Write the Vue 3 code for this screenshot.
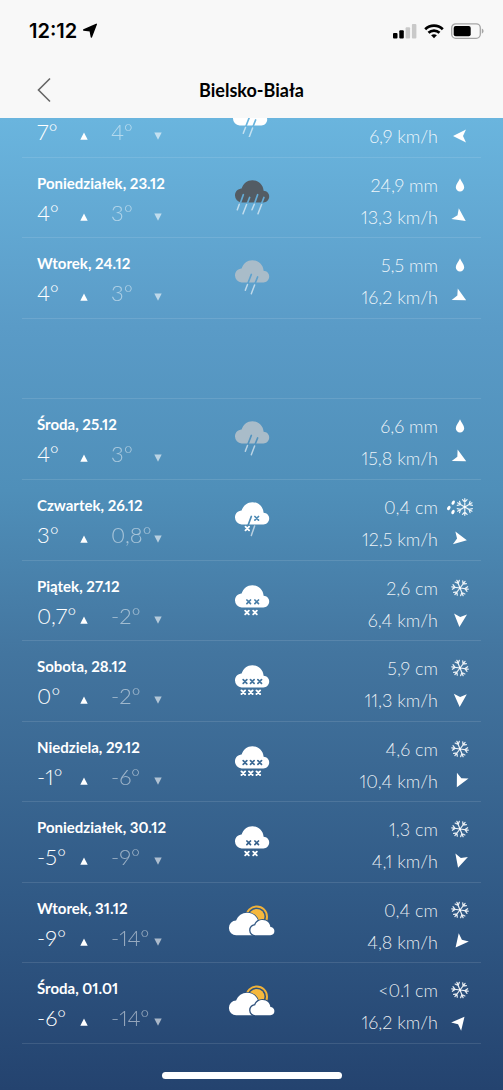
<script setup>
const days = [
  { name: 'Niedziela, 22.12', high: '7°', low: '4°', sky: 'shower', tone: 'white', amount: '9,8 mm', fall: 'drop', wind: '6,9 km/h', angle: 270 },
  { name: 'Poniedziałek, 23.12', high: '4°', low: '3°', sky: 'pour', tone: 'dark', amount: '24,9 mm', fall: 'drop', wind: '13,3 km/h', angle: 125 },
  { name: 'Wtorek, 24.12', high: '4°', low: '3°', sky: 'rain', tone: 'grey', amount: '5,5 mm', fall: 'drop', wind: '16,2 km/h', angle: 118 },
  { gap: true },
  { name: 'Środa, 25.12', high: '4°', low: '3°', sky: 'rain', tone: 'grey', amount: '6,6 mm', fall: 'drop', wind: '15,8 km/h', angle: 117 },
  { name: 'Czwartek, 26.12', high: '3°', low: '0,8°', sky: 'sleet', tone: 'white', amount: '0,4 cm', fall: 'mix', wind: '12,5 km/h', angle: 101 },
  { name: 'Piątek, 27.12', high: '0,7°', low: '-2°', sky: 'snow', tone: 'white', amount: '2,6 cm', fall: 'flake', wind: '6,4 km/h', angle: 185 },
  { name: 'Sobota, 28.12', high: '0°', low: '-2°', sky: 'blizzard', tone: 'white', amount: '5,9 cm', fall: 'flake', wind: '11,3 km/h', angle: 183 },
  { name: 'Niedziela, 29.12', high: '-1°', low: '-6°', sky: 'blizzard', tone: 'white', amount: '4,6 cm', fall: 'flake', wind: '10,4 km/h', angle: 207 },
  { name: 'Poniedziałek, 30.12', high: '-5°', low: '-9°', sky: 'snow', tone: 'white', amount: '1,3 cm', fall: 'flake', wind: '4,1 km/h', angle: 196 },
  { name: 'Wtorek, 31.12', high: '-9°', low: '-14°', sky: 'sun', tone: 'white', amount: '0,4 cm', fall: 'flake', wind: '4,8 km/h', angle: 219 },
  { name: 'Środa, 01.01', high: '-6°', low: '-14°', sky: 'sun', tone: 'white', amount: '<0.1 cm', fall: 'flake', wind: '16,2 km/h', angle: 40 },
]

const cloud = 'M13.6 26.4a6.8 6.8 0 0 1-6.6-6.9c0-3.8 2.9-6.7 6.6-6.9C15 7.700 19.300 4.200 24.400 4.200c6 0 10.800 4.400 11.200 10.600C38.900 15 41.200 17.500 41.200 20.500c0 3.300-2.600 5.900-5.800 5.900z'

const cross = (x, y) => `M${x - 1.8} ${y - 1.8}l3.600 3.600m0-3.600l-3.600 3.600`

const drizzle = {
  cuts: 'M23.300 18.500L20 27M29.600 21L27 27.500',
  streaks: 'M19.500 28.500L17.300 34.300M26.600 29L23.300 37.800',
}

const skies = {
  rain: { move: '0 0', ...drizzle },
  shower: { move: '-2 4', ...drizzle },
  pour: {
    move: '0 0',
    cuts: 'M15.300 18.700L12.200 27.500M21.600 21.500L19.300 27.500M29.600 18.700L26.500 27.500M35.900 21.500L33.600 27.500',
    streaks: 'M11.300 28.300L9.300 33.800M18.600 28.500L15 37.800M26.300 28.300L24 33.800M33.600 28.500L30 37.800',
  },
  sleet: {
    move: '0 0',
    cuts: 'M23.300 18.500L20 27.500' + cross(28.7, 20.3),
    streaks: 'M26.600 28L23.300 37.500',
    flakes: cross(19.3, 30.5),
  },
  snow: {
    move: '0 2',
    cuts: cross(20.7, 20.8) + cross(28.7, 20.8),
    flakes: cross(19, 31.5) + cross(27, 31.5),
  },
  blizzard: {
    move: '0 2',
    cuts: cross(17, 20.5) + cross(24.3, 20.5) + cross(31.7, 20.5),
    flakes: cross(15.3, 31.2) + cross(22.8, 31.2) + cross(30.3, 31.2),
  },
}
</script>

<template>
  <div class="screen">
    <svg class="defs" width="0" height="0" aria-hidden="true">
      <defs>
        <mask v-for="(s, key) in skies" :id="'cut-' + key" :key="key" maskUnits="userSpaceOnUse" x="0" y="0" width="48" height="40">
          <rect width="48" height="40" fill="#fff" />
          <path :d="s.cuts" stroke="#000" stroke-width="1.700" stroke-linecap="round" fill="none" />
        </mask>
        <mask id="cut-front" maskUnits="userSpaceOnUse" x="0" y="0" width="48" height="40">
          <rect width="48" height="40" fill="#fff" />
          <path d="M27.500 34.200a5 5 0 0 1-.2-10C28 21 31.200 19 34.700 19c4.200 0 7.300 3 7.700 7 2.300.1 4 1.900 4 4.100a4.100 4.100 0 0 1-4.100 4.100z" fill="#000" stroke="#000" stroke-width="2.600" />
        </mask>
        <mask id="cut-back" maskUnits="userSpaceOnUse" x="0" y="0" width="48" height="40">
          <rect width="48" height="40" fill="#fff" />
          <path d="M8.300 34.200a7.300 7.300 0 0 1-.2-14.600C10 14.700 14.200 11.700 19 11.700c5.800 0 10.700 4 11.600 9.700V34.200z" fill="#000" stroke="#000" stroke-width="1.600" />
          <path d="M27.500 34.200a5 5 0 0 1-.2-10C28 21 31.200 19 34.700 19c4.200 0 7.300 3 7.700 7 2.300.1 4 1.900 4 4.100z" fill="#000" stroke="#000" stroke-width="2" />
        </mask>
        <g id="flake-shape" fill="none" stroke="#fff" stroke-opacity=".9" stroke-width="1.200" stroke-linecap="round">
          <path v-for="a in [0, 60, 120, 180, 240, 300]" :key="a" :transform="`rotate(${a + 38})`" d="M0 0V-8.300M-2.300-7.400L0-4.900L2.300-7.400" />
        </g>
      </defs>
    </svg>

    <header class="top">
      <div class="status">
        <div class="clock">
          <span>12:12</span>
          <svg width="16" height="16" viewBox="0 0 16 16" aria-hidden="true"><path d="M14.300 1.300L9.400 14L8.200 7.900L1.700 7z" stroke="#000" stroke-width="1.400" stroke-linejoin="round" /></svg>
        </div>
        <div class="signals">
          <svg width="24" height="16" viewBox="0 0 24 16" aria-hidden="true">
            <rect x="0" y="10" width="4.500" height="5.500" rx="1" />
            <rect x="6.300" y="7.300" width="4.500" height="8.200" rx="1" />
            <rect x="12.600" y="4.200" width="4.500" height="11.300" rx="1" fill="#c9c9c9" />
            <rect x="18.900" y="1" width="4.500" height="14.500" rx="1" fill="#c9c9c9" />
          </svg>
          <svg width="20" height="16" viewBox="0 0 20 16" aria-hidden="true">
            <g fill="none" stroke="#000" stroke-width="2.700">
              <path d="M1.200 6.200A12.600 12.600 0 0 1 18.800 6.200" />
              <path d="M4.500 9.800A8 8 0 0 1 15.500 9.800" />
            </g>
            <path d="M7.100 12.300Q10 10 12.900 12.300L10 15.300z" />
          </svg>
          <svg width="33" height="16" viewBox="0 0 33 16" aria-hidden="true">
            <rect x=".7" y=".9" width="28.600" height="14.400" rx="4" fill="none" stroke="#a5a5a5" stroke-width="1.300" />
            <rect x="2.700" y="2.900" width="17" height="10.400" rx="2" />
            <path d="M30.800 5.400Q32.600 6.300 32.600 8.100T30.800 10.800z" fill="#a5a5a5" />
          </svg>
        </div>
      </div>
      <nav class="bar">
        <button class="back" type="button" aria-label="Wstecz">
          <svg width="16" height="26" viewBox="0 0 16 26" aria-hidden="true"><path d="M14 1.500L2.500 13L14 24.500" fill="none" stroke="#666" stroke-width="1.600" /></svg>
        </button>
        <h1>Bielsko-Biała</h1>
      </nav>
    </header>

    <main class="list">
      <section v-for="(d, i) in days" :key="i" class="day">
        <template v-if="!d.gap">
          <div class="left">
            <h2>{{ d.name }}</h2>
            <div class="temps">
              <span class="temp">{{ d.high }}</span>
              <svg class="mark" width="8" height="8" viewBox="0 0 8 8" aria-hidden="true"><path d="M4 .5L7.700 7.700H.3z" fill="#fff" /></svg>
              <span class="temp low">{{ d.low }}</span>
              <svg class="mark dim" width="8" height="8" viewBox="0 0 8 8" aria-hidden="true"><path d="M4 7.700L7.700.5H.3z" fill="#fff" /></svg>
            </div>
          </div>

          <svg class="sky" :class="d.tone" width="48" height="42" viewBox="0 0 48 42" aria-hidden="true">
            <template v-if="d.sky === 'sun'">
              <g mask="url(#cut-back)">
                <circle cx="28.700" cy="15.700" r="7.800" fill="#f5b83d" />
                <circle cx="28.700" cy="15.700" r="10.300" fill="none" stroke="#f0b23a" stroke-width="2" />
              </g>
              <path mask="url(#cut-front)" d="M8.300 34.200a7.300 7.300 0 0 1-.2-14.600C10 14.700 14.200 11.700 19 11.700c5.800 0 10.700 4 11.600 9.700V34.200z" fill="#fff" />
              <path d="M27.500 34.200a5 5 0 0 1-.2-10C28 21 31.200 19 34.700 19c4.200 0 7.300 3 7.700 7 2.300.1 4 1.900 4 4.100a4.100 4.100 0 0 1-4.100 4.100z" fill="#fff" />
            </template>
            <g v-else :transform="`translate(${skies[d.sky].move})`">
              <path class="cloud" :d="cloud" :mask="`url(#cut-${d.sky})`" />
              <path v-if="skies[d.sky].streaks" :d="skies[d.sky].streaks" fill="none" stroke="#fff" stroke-opacity=".6" stroke-width="1.500" stroke-linecap="round" />
              <path v-if="skies[d.sky].flakes" :d="skies[d.sky].flakes" fill="none" stroke="#fff" stroke-width="1.900" stroke-linecap="round" />
            </g>
          </svg>

          <div class="right">
            <span>{{ d.amount }}</span>
            <svg v-if="d.fall === 'drop'" width="28" height="20" viewBox="-14 -10 28 20" aria-hidden="true"><path d="M0-6.700C1 -3.600 4.200-.8 4.200 2.200A4.200 4.200 0 0 1-4.200 2.200C-4.200-.8-1-3.600 0-6.700z" fill="#fff" /></svg>
            <svg v-else-if="d.fall === 'flake'" width="28" height="20" viewBox="-14 -10 28 20" aria-hidden="true"><use href="#flake-shape" /></svg>
            <svg v-else width="28" height="20" viewBox="-14 -10 28 20" aria-hidden="true">
              <use href="#flake-shape" transform="translate(4.800 0) rotate(22)" />
              <g fill="#fff">
                <ellipse v-for="p in ['-6.800 -4.400', '-11.200 1', '-7 5']" :key="p" :transform="`translate(${p}) rotate(28)`" rx="1.500" ry="2.300" />
              </g>
            </svg>
            <span>{{ d.wind }}</span>
            <svg width="28" height="20" viewBox="-14 -10 28 20" aria-hidden="true"><path :transform="`rotate(${d.angle})`" d="M0-7L6.500 6L0 3L-6.500 6z" fill="#fff" /></svg>
          </div>
        </template>
      </section>
    </main>
    <div class="home"></div>
  </div>
</template>

<style>
body {
  margin: 0;
}
</style>

<style scoped>
.screen {
  position: relative;
  display: flex;
  flex-direction: column;
  min-height: 100vh;
  overflow: hidden;
  background: linear-gradient(180deg, #6ab5de 118px, #5a9bc7 30%, #4f8fb9 45%, #43759f 60%, #315a86 82%, #24436f 100%);
  font-family: Lato, "Open Sans", "Liberation Sans", sans-serif;
  font-variant-numeric: proportional-nums;
  color: #fff;
}
.defs {
  position: absolute;
}
.top {
  position: relative;
  z-index: 1;
  display: flex;
  flex-direction: column;
  background: #f8f8f8;
  color: #000;
}
.status {
  display: flex;
  justify-content: space-between;
  align-items: center;
  height: 62px;
  padding: 0 19px 0 29px;
}
.clock {
  display: flex;
  align-items: center;
  gap: 5px;
  font: 600 20px/24px Inter, sans-serif;
}
.signals {
  display: flex;
  align-items: center;
  gap: 7px;
}
.bar {
  display: grid;
  grid-template-columns: 60px 1fr 60px;
  align-items: center;
  height: 56px;
}
.back {
  display: flex;
  justify-content: flex-end;
  padding: 0 8px 0 0;
  border: 0;
  background: none;
}
.bar h1 {
  margin: 0;
  text-align: center;
  font-size: 18px;
  line-height: 24px;
  font-weight: 700;
}
.list {
  flex: 1;
  display: grid;
  grid-auto-rows: 1fr;
  margin: -41px 22px 46px;
}
.day {
  display: grid;
  grid-template-columns: 1fr 48px 1fr;
  align-items: start;
  min-height: 80px;
  box-sizing: border-box;
  border-bottom: 1px solid rgba(255, 255, 255, 0.11);
}
.left {
  padding: 14px 0 0 15px;
}
.left h2 {
  margin: 0;
  font-size: 15px;
  line-height: 22px;
  font-weight: 700;
}
.temps {
  display: grid;
  grid-template-columns: 43px 31px 43px 12px;
  align-items: center;
  padding-top: 4px;
}
.temp {
  font-size: 22px;
  line-height: 30px;
  font-weight: 300;
  white-space: nowrap;
}
.low {
  opacity: 0.5;
}
.dim {
  opacity: 0.6;
}
.mark {
  margin-top: 8px;
}
.sky {
  margin-top: 18px;
}
.white .cloud {
  fill: #fff;
}
.dark .cloud {
  fill: #535c64;
}
.grey .cloud {
  fill: #a9bcc9;
}
.right {
  display: grid;
  grid-template-columns: auto 28px;
  justify-content: end;
  align-items: center;
  column-gap: 8px;
  padding: 11px 7px 0 0;
  text-align: right;
  font-size: 18px;
  line-height: 32px;
  font-weight: 300;
  color: rgba(255, 255, 255, 0.9);
}
.home {
  position: absolute;
  left: 50%;
  bottom: 11px;
  width: 180px;
  height: 7px;
  margin-left: -90px;
  border-radius: 4px;
  background: #fff;
}
</style>
